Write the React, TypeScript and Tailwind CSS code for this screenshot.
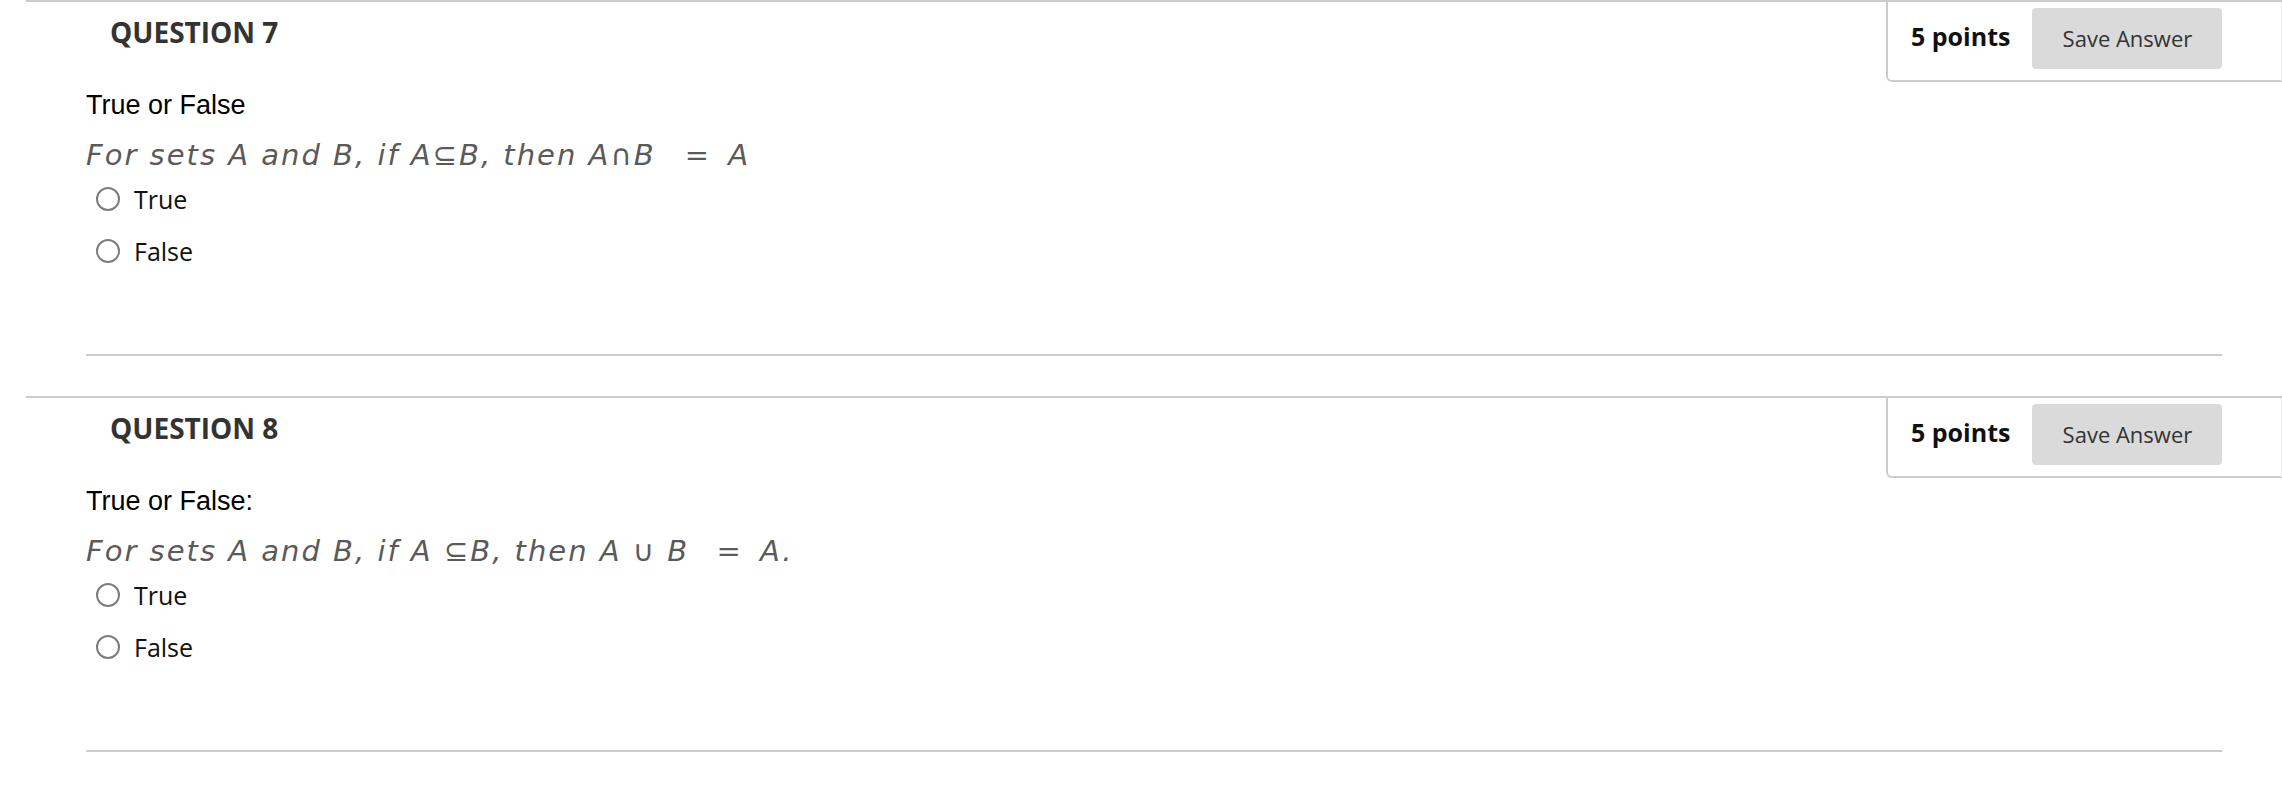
import React from "react";

const OPEN = { fontFamily: '"Open Sans", "Liberation Sans", sans-serif' };
const ARIAL = { fontFamily: '"Liberation Sans", Arial, sans-serif' };
const DEJAVU = { fontFamily: '"DejaVu Sans", Verdana, sans-serif' };

function Radio({ label }: { label: string }) {
  return (
    <div className="flex h-[52px] items-center">
      <span className="ml-[10px] box-border inline-block h-[24px] w-[24px] rounded-full border-2 border-[#7d7d7d] bg-white" />
      <span className="ml-[14px] text-[25px] leading-[24px] text-[#111]" style={OPEN}>
        {label}
      </span>
    </div>
  );
}

function I({ children }: { children: React.ReactNode }) {
  return <span className="italic">{children}</span>;
}

function Question({
  num,
  prompt,
  math,
}: {
  num: number;
  prompt: string;
  math: React.ReactNode;
}) {
  return (
    <section className="pl-[26px]">
      <div className="flex items-start justify-between border-t-2 border-[#cccccc]">
        <h2
          className="pl-[84px] pt-[16px] text-[28px] font-bold leading-[28px] text-[#333333]"
          style={OPEN}
        >
          QUESTION {num}
        </h2>
        <div className="flex w-[396px] items-center gap-[22px] rounded-bl-[6px] border-b-2 border-l-2 border-r border-[#cccccc] border-r-[#ececec] pb-[11px] pl-[23px] pt-[6px]">
          <span className="pb-[5px] text-[25px] font-bold leading-[26px] text-[#111]" style={OPEN}>
            5 points
          </span>
          <button
            className="h-[61px] w-[190px] rounded-[4px] bg-[#dadada] pb-[2px] text-[22px] leading-[24px] text-[#333]"
            style={OPEN}
          >
            Save Answer
          </button>
        </div>
      </div>
      <div className="pl-[60px] pr-[60px]">
        <p className="mt-[8px] text-[27px] leading-[30px] text-black" style={ARIAL}>
          {prompt}
        </p>
        <p
          className="mt-[18px] whitespace-pre text-[29px] leading-[34px] tracking-[2px] text-[#5a5a5a]"
          style={DEJAVU}
        >
          {math}
        </p>
        <div className="mt-[1px]">
          <Radio label="True" />
          <Radio label="False" />
        </div>
        <div className="mt-[77px] border-b-2 border-[#cccccc]" />
      </div>
    </section>
  );
}

export default function App() {
  return (
    <div className="min-h-screen w-full bg-white">
      <Question
        num={7}
        prompt="True or False"
        math={
          <>
            <I>For sets A and B, if A</I>
            <span>⊆</span>
            <I>B, then A</I>
            <span>∩</span>
            <I>B</I>
            <span className="ml-[18px] mr-[6px]"> = </span>
            <I>A</I>
          </>
        }
      />
      <div className="h-[40px]" />
      <Question
        num={8}
        prompt="True or False:"
        math={
          <>
            <I>For sets A and B, if A </I>
            <span>⊆</span>
            <I>B, then A </I>
            <span>∪</span>
            <I> B</I>
            <span className="ml-[16px] mr-[6px]"> = </span>
            <I>A.</I>
          </>
        }
      />
    </div>
  );
}
